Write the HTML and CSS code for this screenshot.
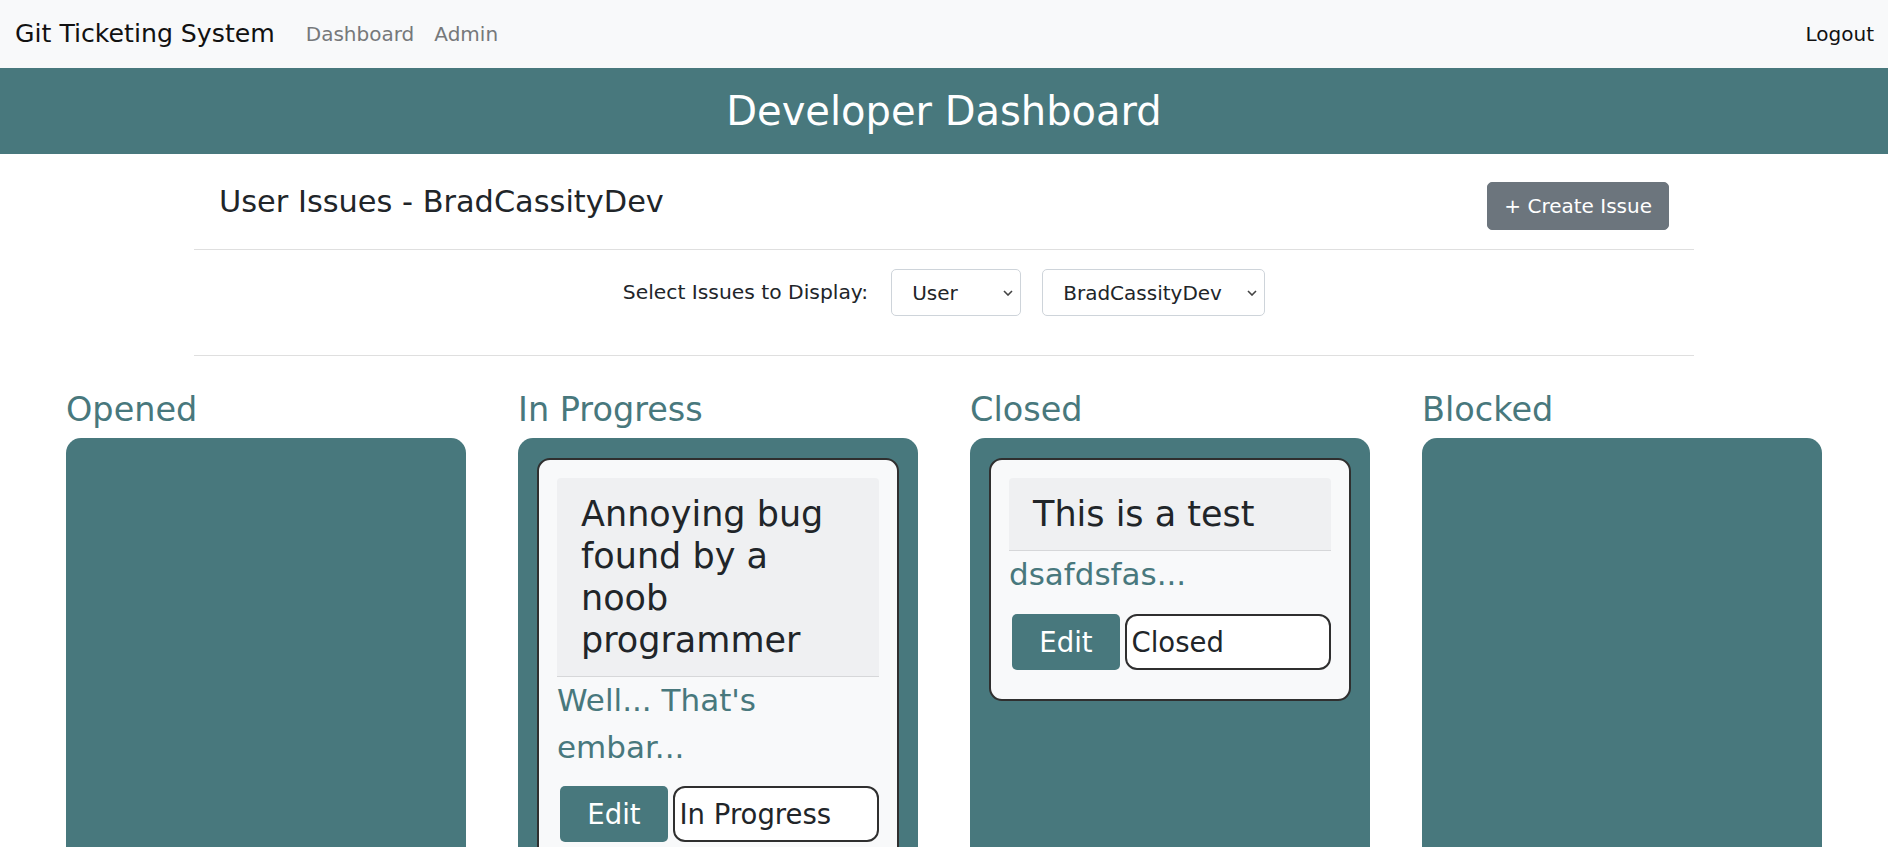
FILE: index.html
```html
<!DOCTYPE html>
<html lang="en">
<head>
<meta charset="utf-8">
<title>Git Ticketing System</title>
<link rel="stylesheet" href="styles.css">
</head>
<body>
<nav class="navbar">
  <a class="brand" href="#">Git Ticketing System</a>
  <div class="nav-links">
    <a class="nav-link" href="#">Dashboard</a>
    <a class="nav-link" href="#">Admin</a>
  </div>
  <a class="logout" href="#">Logout</a>
</nav>

<header class="banner">
  <h1 class="banner-title">Developer Dashboard</h1>
</header>

<main class="container">
  <div class="title-row">
    <h4 class="page-title">User Issues - BradCassityDev</h4>
    <button class="btn-create">+ Create Issue</button>
  </div>
  <hr class="divider">
  <div class="filter-row">
    <label class="filter-label">Select Issues to Display:</label>
    <select class="filter-select select-type">
      <option>User</option>
    </select>
    <select class="filter-select select-user">
      <option>BradCassityDev</option>
    </select>
  </div>
  <hr class="divider">
</main>

<section class="board">
  <div class="column">
    <h2 class="column-title">Opened</h2>
    <div class="column-box"></div>
  </div>
  <div class="column">
    <h2 class="column-title">In Progress</h2>
    <div class="column-box">
      <div class="issue-card">
        <div class="issue-header">
          <h3 class="issue-title">Annoying bug found by a noob programmer</h3>
        </div>
        <p class="issue-desc">Well... That's embar...</p>
        <div class="issue-actions">
          <button class="btn-edit">Edit</button>
          <select class="status-select">
            <option>In Progress</option>
          </select>
        </div>
      </div>
    </div>
  </div>
  <div class="column">
    <h2 class="column-title">Closed</h2>
    <div class="column-box">
      <div class="issue-card">
        <div class="issue-header">
          <h3 class="issue-title">This is a test</h3>
        </div>
        <p class="issue-desc">dsafdsfas...</p>
        <div class="issue-actions">
          <button class="btn-edit">Edit</button>
          <select class="status-select">
            <option>Closed</option>
          </select>
        </div>
      </div>
    </div>
  </div>
  <div class="column">
    <h2 class="column-title">Blocked</h2>
    <div class="column-box"></div>
  </div>
</section>
</body>
</html>
```

FILE: styles.css
```css
* {
  box-sizing: border-box;
}

body {
  margin: 0;
  background: #ffffff;
  color: #212529;
  font-family: "DejaVu Sans", Verdana, sans-serif;
  font-size: 20px;
  line-height: 1.5;
}

a {
  text-decoration: none;
}

/* Navbar */
.navbar {
  display: flex;
  align-items: center;
  height: 68px;
  padding: 0 14px 0 15px;
  background: #f8f9fa;
}

.brand {
  font-size: 25.2px;
  line-height: 1.5;
  color: #111111;
  margin-right: 31px;
}

.nav-links {
  display: flex;
  gap: 20px;
  flex: 1;
}

.nav-link {
  color: #76787a;
  font-size: 20px;
}

.logout {
  color: #111111;
  font-size: 20px;
}

/* Banner */
.banner {
  background: #48787d;
  padding: 19px 0;
}

.banner-title {
  margin: 0;
  text-align: center;
  color: #ffffff;
  font-size: 40px;
  line-height: 48px;
  font-weight: normal;
}

/* Container */
.container {
  width: 1500px;
  margin: 0 auto;
}

.title-row {
  display: flex;
  justify-content: space-between;
  align-items: flex-start;
  padding: 28px 25px 0;
}

.page-title {
  margin: 2px 0 0;
  font-size: 30.4px;
  line-height: 36px;
  font-weight: normal;
  color: #212529;
}

.btn-create {
  font-family: inherit;
  font-size: 20px;
  line-height: 30px;
  padding: 8px 16px;
  color: #ffffff;
  background: #6c757d;
  border: 1px solid #6c757d;
  border-radius: 5px;
}

.divider {
  margin: 19px 0;
  height: 0;
  border: 0;
  border-top: 1px solid #dfdfdf;
}

.filter-row {
  display: flex;
  justify-content: center;
  align-items: center;
  margin-bottom: 39px;
}

.filter-label {
  font-size: 20.3px;
  margin-right: 23px;
}

.filter-select {
  appearance: none;
  -webkit-appearance: none;
  height: 47px;
  padding: 0 0 0 20px;
  font-family: inherit;
  font-size: 20px;
  color: #212529;
  background-color: #ffffff;
  background-image: url("data:image/svg+xml,%3Csvg xmlns='http://www.w3.org/2000/svg' width='10' height='6' viewBox='0 0 10 6'%3E%3Cpath d='M1 1l4 4 4-4' fill='none' stroke='%23444' stroke-width='1.6'/%3E%3C/svg%3E");
  background-repeat: no-repeat;
  background-position: right 7px center;
  background-size: 10px 6px;
  border: 1px solid #ced4da;
  border-radius: 5px;
}

.select-type {
  width: 130px;
  margin-right: 21px;
}

.select-user {
  width: 223px;
}

/* Board */
.board {
  display: grid;
  grid-template-columns: repeat(4, 400px);
  column-gap: 52px;
  justify-content: center;
  margin-top: 34px;
}

.column-title {
  margin: 0 0 8px;
  font-size: 33.5px;
  line-height: 1.2;
  font-weight: normal;
  color: #48787d;
}

.column-box {
  background: #48787d;
  border-radius: 15px;
  padding: 20px 19px;
  min-height: 520px;
}

.issue-card {
  background: #f8f9fa;
  border: 2px solid #2f2f2f;
  border-radius: 13px;
  padding: 18px 18px 29px;
}

.issue-header {
  background: #eff0f2;
  border-bottom: 1px solid #d6d7d9;
  border-radius: 4px 4px 0 0;
  padding: 15px 24px;
}

.issue-title {
  margin: 0;
  font-size: 35px;
  line-height: 42px;
  font-weight: normal;
  color: #212529;
}

.issue-desc {
  margin: 0 0 16px;
  font-size: 31px;
  line-height: 46.5px;
  color: #48787d;
}

.issue-actions {
  display: flex;
  gap: 4.5px;
  padding-left: 3px;
}

.btn-edit {
  width: 108px;
  height: 56px;
  font-family: inherit;
  font-size: 27.5px;
  color: #ffffff;
  background: #48787d;
  border: none;
  border-radius: 5px;
}

.status-select {
  appearance: none;
  -webkit-appearance: none;
  flex: 1;
  min-width: 0;
  height: 56px;
  padding: 0 0 0 5px;
  font-family: inherit;
  font-size: 27.5px;
  color: #212529;
  background: #ffffff;
  border: 2px solid #2f2f2f;
  border-radius: 12px;
}
```
